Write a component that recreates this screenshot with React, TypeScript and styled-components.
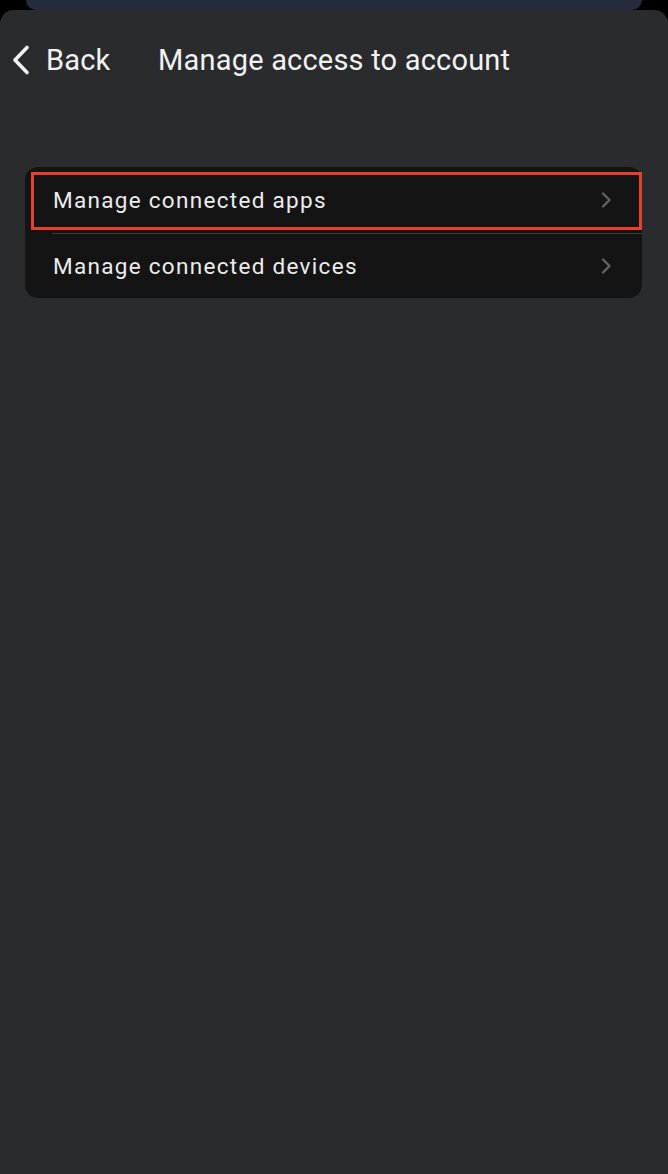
import styled, { createGlobalStyle } from "styled-components";

const GlobalStyle = createGlobalStyle`
    html, body {
        margin: 0;
        padding: 0;
        background: #000000;
    }
    * {
        box-sizing: border-box;
    }
`;

const rows = [
    { label: "Manage connected apps", highlighted: true },
    { label: "Manage connected devices", highlighted: false },
];

export default function App() {
    return (
        <Screen>
            <GlobalStyle />
            <BehindSheet />
            <Sheet>
                <Header>
                    <BackButton>
                        <svg width="20" height="32" viewBox="0 0 20 32" fill="none">
                            <path
                                d="M16 3.5 L4 16 L16 28.5"
                                stroke="#f2f2f2"
                                strokeWidth="3.6"
                                strokeLinecap="round"
                                strokeLinejoin="round"
                            />
                        </svg>
                        <span>Back</span>
                    </BackButton>
                    <Title>Manage access to account</Title>
                </Header>
                <ListCard>
                    {rows.map((r, i) => (
                        <Row key={r.label} $highlighted={r.highlighted} $divider={i > 0}>
                            <RowLabel>{r.label}</RowLabel>
                            <svg width="12" height="18" viewBox="0 0 12 18" fill="none">
                                <path
                                    d="M3 2.5 L9.5 9 L3 15.5"
                                    stroke="#636365"
                                    strokeWidth="2.4"
                                    strokeLinecap="round"
                                    strokeLinejoin="round"
                                />
                            </svg>
                        </Row>
                    ))}
                </ListCard>
            </Sheet>
        </Screen>
    );
}

const Screen = styled.div`
    width: 668px;
    height: 1174px;
    overflow: hidden;
    background: #000000;
    display: flex;
    flex-direction: column;
    font-family: "Roboto", "Open Sans", sans-serif;
`;

const BehindSheet = styled.div`
    height: 10px;
    margin: 0 26px;
    background: #252b3d;
    border-radius: 0 0 10px 10px;
    flex-shrink: 0;
`;

const Sheet = styled.div`
    flex: 1;
    background: #2a2b2d;
    border-radius: 14px 14px 0 0;
    padding-top: 34px;
`;

const Header = styled.div`
    display: flex;
    align-items: center;
    height: 32px;
    padding-left: 11px;
`;

const BackButton = styled.div`
    display: flex;
    align-items: center;
    gap: 15px;
    width: 147px;
    color: #f2f2f2;
    font-size: 29px;
    letter-spacing: 0.2px;

    svg {
        display: block;
    }
`;

const Title = styled.div`
    color: #f2f2f2;
    font-size: 29px;
    letter-spacing: 0.2px;
    white-space: nowrap;
`;

const ListCard = styled.div`
    margin: 91px 26px 0 25px;
    background: #141414;
    border-radius: 13px;
    display: flex;
    flex-direction: column;
`;

const Row = styled.div<{ $highlighted: boolean; $divider: boolean }>`
    position: relative;
    display: flex;
    align-items: center;
    justify-content: space-between;
    height: ${(p) => (p.$divider ? "65px" : "66px")};
    padding: 0 30px 0 28px;

    &::before {
        content: "";
        display: ${(p) => (p.$divider ? "block" : "none")};
        position: absolute;
        top: 0;
        left: 27px;
        right: 0;
        height: 1px;
        background: #3c3c3e;
    }

    &::after {
        content: "";
        display: ${(p) => (p.$highlighted ? "block" : "none")};
        position: absolute;
        top: 5px;
        left: 6px;
        right: 0;
        bottom: 3px;
        border: 3.5px solid #e8402a;
    }
`;

const RowLabel = styled.span`
    color: #ececec;
    font-size: 22.5px;
    letter-spacing: 1.3px;
`;
